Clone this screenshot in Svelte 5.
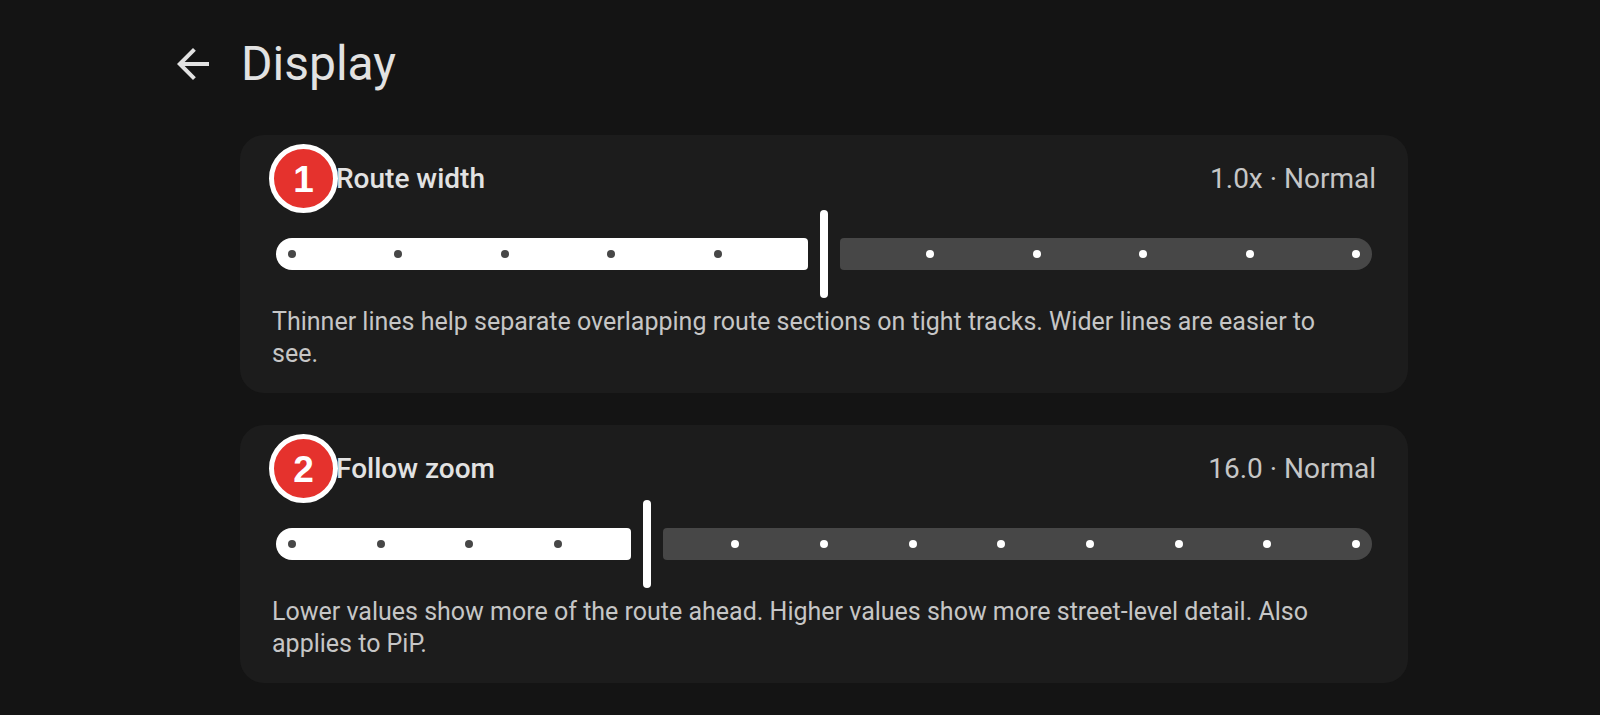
<script lang="ts">
    type Setting = {
        id: string;
        label: string;
        value: number;
        min: number;
        max: number;
        step: number;
        unit: string;
        normal: number;
        below: string;
        above: string;
        description: string;
    };

    let settings: Setting[] = $state([
        {
            id: 'route-width',
            label: 'Route width',
            value: 1,
            min: 0.5,
            max: 1.5,
            step: 0.1,
            unit: 'x',
            normal: 1,
            below: 'Thin',
            above: 'Wide',
            description: 'Thinner lines help separate overlapping route sections on tight tracks. Wider lines are easier to see.'
        },
        {
            id: 'follow-zoom',
            label: 'Follow zoom',
            value: 16,
            min: 14,
            max: 20,
            step: 0.5,
            unit: '',
            normal: 16,
            below: 'Far',
            above: 'Close',
            description: 'Lower values show more of the route ahead. Higher values show more street-level detail. Also applies to PiP.'
        }
    ]);

    function stepCount(s: Setting) {
        return Math.round((s.max - s.min) / s.step);
    }

    function position(s: Setting) {
        return Math.round((s.value - s.min) / s.step);
    }

    function valueName(s: Setting) {
        if (s.value < s.normal) return s.below;
        if (s.value > s.normal) return s.above;
        return 'Normal';
    }
</script>

<main class="page">
    <header class="top-bar">
        <button class="back" type="button" aria-label="Back">
            <svg viewBox="0 0 24 24" width="48" height="48" aria-hidden="true">
                <path d="M20 11H7.83l5.59-5.59L12 4l-8 8 8 8 1.41-1.41L7.83 13H20v-2z" fill="currentColor" />
            </svg>
        </button>
        <h1>Display</h1>
    </header>

    <div class="cards">
        {#each settings as setting, i (setting.id)}
            <section class="card">
                <span class="badge">{i + 1}</span>
                <div class="row">
                    <label for={setting.id}>{setting.label}</label>
                    <output for={setting.id}>{setting.value.toFixed(1)}{setting.unit} · {valueName(setting)}</output>
                </div>

                <div class="slider">
                    <div class="track">
                        <div class="active" style="--fraction: {position(setting) / stepCount(setting)}"></div>
                        <div class="thumb"></div>
                        <div class="inactive"></div>
                    </div>
                    <div class="ticks">
                        {#each { length: stepCount(setting) + 1 } as _, n}
                            <span class="tick" class:filled={n < position(setting)} class:current={n === position(setting)}></span>
                        {/each}
                    </div>
                    <input
                        id={setting.id}
                        type="range"
                        min={setting.min}
                        max={setting.max}
                        step={setting.step}
                        bind:value={setting.value}
                    />
                </div>

                <p>{setting.description}</p>
            </section>
        {/each}
    </div>
</main>

<style>
    :global(body) {
        margin: 0;
        background: #141414;
    }

    .page {
        min-height: 100vh;
        box-sizing: border-box;
        padding: 0 192px 32px 144px;
        background: #141414;
        color: #e2e2e2;
        font-family: Roboto, sans-serif;
    }

    .top-bar {
        display: flex;
        align-items: center;
        height: 127px;
    }

    .back {
        display: flex;
        align-items: center;
        justify-content: center;
        width: 97px;
        height: 96px;
        padding: 0;
        border: none;
        background: none;
        color: inherit;
        cursor: pointer;
    }

    h1 {
        margin: 0;
        font-size: 48px;
        line-height: 64px;
        font-weight: 400;
    }

    .cards {
        display: flex;
        flex-direction: column;
        gap: 32px;
        padding: 8px 0 0 96px;
    }

    .card {
        position: relative;
        padding: 24px 32px 23px;
        border-radius: 24px;
        background: #1c1c1c;
    }

    .badge {
        position: absolute;
        top: 9px;
        left: 29px;
        display: flex;
        align-items: center;
        justify-content: center;
        box-sizing: border-box;
        width: 69px;
        height: 69px;
        padding-top: 3px;
        border: 5px solid #ffffff;
        border-radius: 50%;
        background: #e5322d;
        color: #ffffff;
        font-family: "Liberation Sans", Arial, sans-serif;
        font-size: 37px;
        font-weight: 700;
    }

    .row {
        display: flex;
        justify-content: space-between;
        padding-left: 64px;
        font-size: 28px;
        line-height: 40px;
    }

    label {
        font-weight: 500;
    }

    output {
        color: #c6c6c6;
    }

    .slider {
        display: grid;
        margin: 11px 4px 8px;
    }

    .slider > * {
        grid-area: 1 / 1;
    }

    .track {
        display: flex;
        align-items: center;
        gap: 12px;
    }

    .active {
        width: calc((100% - 32px) * var(--fraction));
        height: 32px;
        border-radius: 16px 4px 4px 16px;
        background: #ffffff;
    }

    .thumb {
        width: 8px;
        height: 88px;
        border-radius: 4px;
        background: #ffffff;
    }

    .inactive {
        flex: 1;
        height: 32px;
        border-radius: 4px 16px 16px 4px;
        background: #474747;
    }

    .ticks {
        display: flex;
        align-items: center;
        justify-content: space-between;
        padding: 0 12px;
    }

    .tick {
        width: 8px;
        height: 8px;
        border-radius: 50%;
        background: #ffffff;
    }

    .tick.filled {
        background: #474747;
    }

    .tick.current {
        visibility: hidden;
    }

    input {
        width: 100%;
        margin: 0;
        opacity: 0;
        cursor: pointer;
    }

    p {
        margin: 0;
        padding-right: 32px;
        color: #c6c6c6;
        font-size: 25px;
        line-height: 32px;
    }
</style>
